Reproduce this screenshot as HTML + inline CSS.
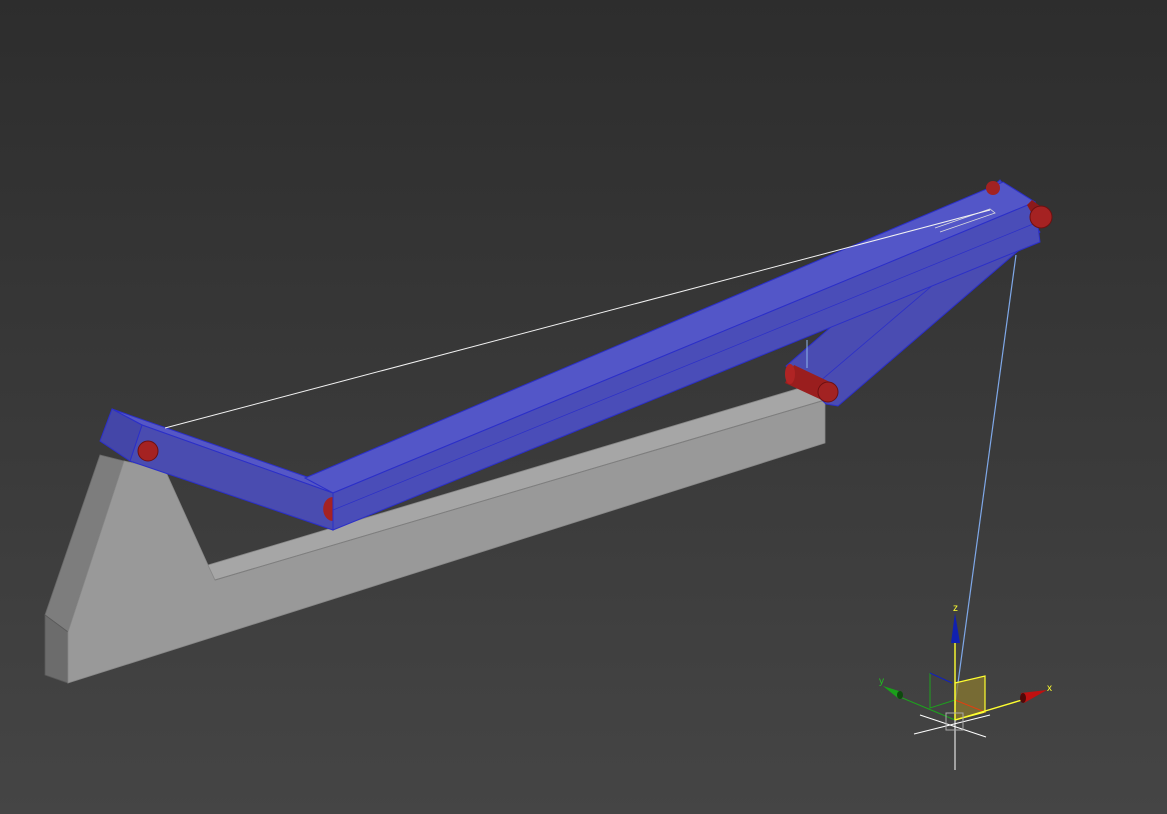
<!DOCTYPE html>
<html><head><meta charset="utf-8"><style>
html,body{margin:0;padding:0;width:1167px;height:814px;overflow:hidden;background:#383838}
svg{display:block}
text{font-family:"Liberation Sans",sans-serif}
</style></head><body>
<svg width="1167" height="814" viewBox="0 0 1167 814" xmlns="http://www.w3.org/2000/svg">
<defs>
<linearGradient id="bg" x1="0" y1="0" x2="0" y2="1">
<stop offset="0" stop-color="#2d2d2d"/><stop offset="1" stop-color="#454545"/>
</linearGradient>
</defs>
<rect width="1167" height="814" fill="url(#bg)"/>

<!-- gray base -->
<polygon points="45,615 100,455 124,461 68,632" fill="#7d7d7d" stroke="#6a6a6a" stroke-width="0.8"/>
<polygon points="45,615 68,632 68,683 45,675" fill="#6c6c6c" stroke="#5a5a5a" stroke-width="0.8"/>
<polygon points="68,632 124,461 165,470 208,565 215,580 825,400 825,443 68,683" fill="#999999" stroke="#888" stroke-width="0.8"/>
<polygon points="208,565 810,385 825,400 215,580" fill="#a6a6a6" stroke="#888" stroke-width="0.8"/>
<line x1="215" y1="580" x2="825" y2="400" stroke="#7e7e7e" stroke-width="1"/>

<!-- lower diagonal beam (behind) -->
<polygon points="786,366 1000,180 1040,232 838,406 826,404" fill="#4a4cb2" stroke="#2b2fc8" stroke-width="1"/>
<line x1="812" y1="388" x2="960" y2="262" stroke="#2b2fc8" stroke-width="0.8"/>
<!-- red cylinder lower -->
<polygon points="785,383 794,365 832,383 824,401" fill="#9a1e1e"/>
<ellipse cx="790" cy="374" rx="5" ry="10" fill="#b02424"/>
<circle cx="828" cy="392" r="10" fill="#a22222" stroke="#6e1010" stroke-width="1"/>
<line x1="807" y1="340" x2="807" y2="368" stroke="#8fb6ee" stroke-width="1"/>

<!-- short left beam -->
<polygon points="112,409 310,478 333,493 142,425" fill="#5557c6" stroke="#2b2fc8" stroke-width="1"/>
<polygon points="142,425 333,493 333,530 130,461" fill="#4a4cb0" stroke="#2b2fc8" stroke-width="1"/>
<polygon points="100,441 112,409 142,425 130,461" fill="#4446a8" stroke="#2b2fc8" stroke-width="1"/>
<circle cx="148" cy="451" r="10" fill="#a52222" stroke="#6e1010" stroke-width="1"/>
<path d="M333,497 A9,11 0 0 0 333,521 Z" fill="#a52222"/>

<!-- long beam -->
<polygon points="305,478 1003,182 1035,202 333,493" fill="#5356c8" stroke="#2b2fc8" stroke-width="1"/>
<polygon points="333,493 1035,202 1040,242 333,530" fill="#4a4db8" stroke="#2b2fc8" stroke-width="1"/>
<line x1="333" y1="510" x2="1038" y2="222" stroke="#2b2fc8" stroke-width="0.7"/>
<!-- red caps top -->
<circle cx="993" cy="188" r="7" fill="#a22222"/>
<polygon points="1027,205 1032,200 1045,210 1040,228" fill="#8c1a1a"/>
<circle cx="1041" cy="217" r="11" fill="#a52222" stroke="#6e1010" stroke-width="1"/>
<!-- white detail -->
<polyline points="935,228 990,209 995,213 940,232" fill="none" stroke="#ddd" stroke-width="0.8"/>

<!-- lines -->
<line x1="165" y1="428" x2="990" y2="210" stroke="#f2f2f2" stroke-width="1"/>
<line x1="1016" y1="255" x2="955" y2="705" stroke="#7fa8e8" stroke-width="1.2"/>

<!-- gizmo -->
<polygon points="955,683 985,676 985,712 955,720" fill="#8a7a30" fill-opacity="0.75" stroke="#ffff30" stroke-width="1.2"/>
<polyline points="930,673 930,708 955,700" fill="none" stroke="#1ea01e" stroke-width="1"/>
<line x1="930" y1="673" x2="952" y2="683" stroke="#1020c0" stroke-width="1"/>
<line x1="955" y1="700" x2="985" y2="712" stroke="#e04010" stroke-width="1"/>
<line x1="955" y1="720" x2="900" y2="697" stroke="#1ea01e" stroke-width="1.2"/>
<line x1="955" y1="720" x2="955" y2="640" stroke="#ffff30" stroke-width="1.4"/>
<line x1="955" y1="720" x2="1022" y2="700" stroke="#ffff30" stroke-width="1.4"/>
<polygon points="955,613 951,643 960,643" fill="#1020b0"/>
<polygon points="883,686 902,692 899,699" fill="#1aa01a"/>
<ellipse cx="900" cy="695" rx="3" ry="4" fill="#0e4a0e"/>
<polygon points="1047,690 1021,693 1024,703" fill="#c01010"/>
<ellipse cx="1023" cy="698" rx="3" ry="5" fill="#500808"/>
<line x1="914" y1="734" x2="990" y2="715" stroke="#fff" stroke-width="1"/>
<line x1="920" y1="715" x2="986" y2="737" stroke="#fff" stroke-width="1"/>
<line x1="955" y1="720" x2="955" y2="770" stroke="#fff" stroke-width="1"/>
<rect x="946" y="713" width="17" height="17" fill="none" stroke="#aaa" stroke-width="1"/>
<text x="953" y="611" font-size="10" fill="#ffff30">z</text>
<text x="1047" y="691" font-size="10" fill="#ffff30">x</text>
<text x="879" y="684" font-size="10" fill="#20c020">y</text>
</svg>
</body></html>
